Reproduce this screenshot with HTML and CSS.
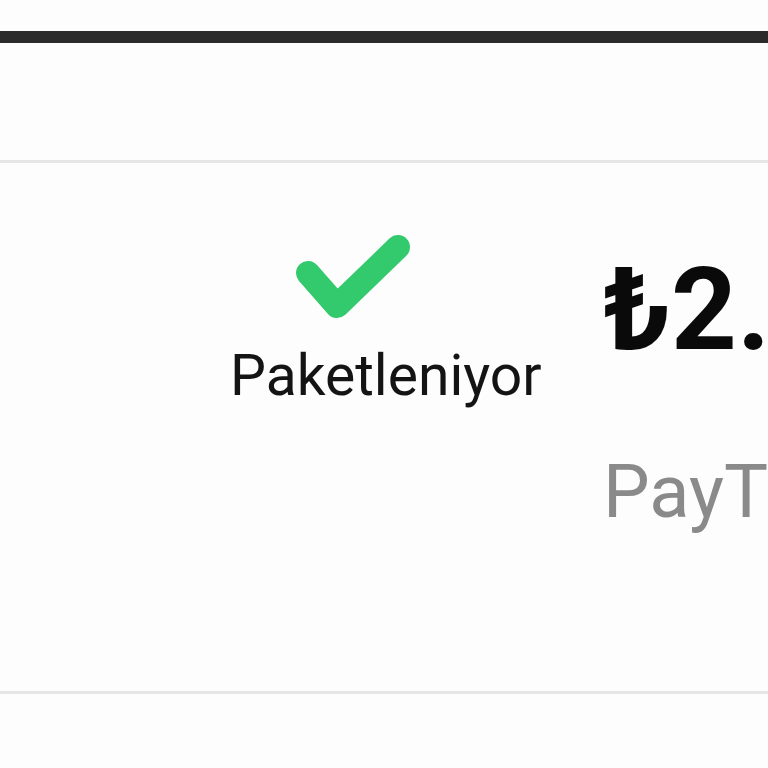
FILE: index.html
```html
<!DOCTYPE html>
<html lang="tr">
<head>
    <meta charset="UTF-8">
    <meta name="viewport" content="width=device-width, initial-scale=1.0">
    <title>Sipariş</title>
    <link rel="stylesheet" href="styles.css">
</head>
<body>
    <div class="page">
        <div class="top-frame"></div>
        <div class="header-space"></div>
        <div class="divider"></div>

        <div class="order-row">
            <div class="status">
                <svg class="status-icon" width="120" height="96" viewBox="0 0 120 96">
                    <path d="M14 43 L43 76 L104 17" fill="none" stroke="#33c96d" stroke-width="24" stroke-linecap="round" stroke-linejoin="round"/>
                </svg>
                <span class="status-label">Paketleniyor</span>
            </div>

            <div class="summary">
                <div class="price">₺2.499,90</div>
                <div class="payment">PayTR ile ödendi</div>
            </div>
        </div>

        <div class="divider"></div>
    </div>
</body>
</html>
```

FILE: styles.css
```css
body {
    margin: 0;
    background-color: #fdfdfd;
    font-family: Roboto, "DejaVu Sans", sans-serif;
    overflow: hidden;
}

.page {
    width: 768px;
    height: 768px;
    overflow: hidden;
}

.top-frame {
    height: 12px;
    margin-top: 31px;
    background-color: #2b2b2b;
}

.header-space {
    height: 117px;
}

.divider {
    height: 3px;
    background-color: #e6e6e6;
}

.order-row {
    display: flex;
    height: 528px;
}

.status {
    width: 373px;
    flex-shrink: 0;
    padding-left: 230px;
    padding-top: 67px;
    display: flex;
    flex-direction: column;
    align-items: flex-start;
}

.status-icon {
    display: block;
    margin-left: 64px;
}

.status-label {
    margin-top: 16px;
    font-size: 57px;
    line-height: 1.2;
    color: #141414;
    white-space: nowrap;
}

.summary {
    padding-top: 89px;
    white-space: nowrap;
}

.price {
    font-size: 115px;
    font-weight: 700;
    line-height: 1;
    color: #0a0a0a;
}

.payment {
    margin-top: 88px;
    font-size: 74px;
    line-height: 1;
    color: #8a8a8a;
}
```
